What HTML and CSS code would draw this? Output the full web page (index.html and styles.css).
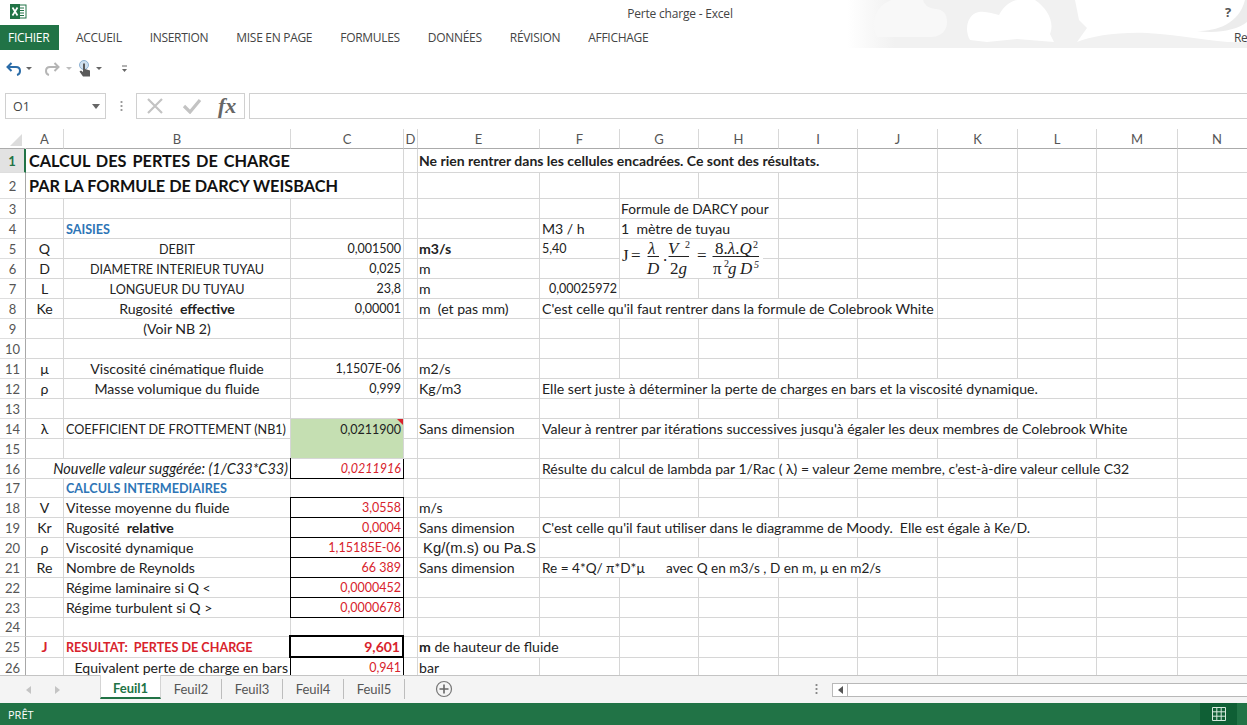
FILE: index.html
```html
<!DOCTYPE html>
<html lang="fr">
<head>
<meta charset="utf-8">
<title>Perte charge - Excel</title>
<link rel="stylesheet" href="styles.css">
</head>
<body>
<div class="app">
  <header class="titlebar">
    <svg class="clouds" viewBox="0 0 400 48" width="400" height="48" aria-hidden="true">
      <defs><linearGradient id="fade" x1="0" x2="1" y1="0" y2="0"><stop offset="0" stop-color="#f1f1f1" stop-opacity="0"/><stop offset=".12" stop-color="#f1f1f1"/><stop offset="1" stop-color="#f1f1f1"/></linearGradient></defs>
      <rect width="400" height="48" fill="url(#fade)"/>
      <path d="M30 37C24 25 28 8 40 2L44 0H76C78 6 82 8 88 9C96 9 100 14 100 22C100 30 95 36 85 37Z" fill="#f8f8f8"/>
      <path d="M123 40C117 30 120 14 132 12C140 11 146 14 152 15C158 4 166 0 172 0H188C200 8 208 22 203 34L207 42L170 39L140 42Z" fill="#fff"/>
      <path d="M228 0H400V33C382 30 372 32 365 31C385 28 398 20 400 0L400 42C370 44 340 35 300 33C270 32 245 36 230 42L240 28L232 20Z" fill="#fff"/>
      <path d="M350 31C370 31 392 24 398 0H400V22C390 30 370 34 350 31Z" fill="#ececec"/>
    </svg>
    <svg class="logo" viewBox="0 0 17 15" width="17" height="15" aria-hidden="true">
      <rect x="7" y="1" width="9" height="13" fill="#fff" stroke="#217346"/>
      <path d="M9 4h5M9 6.500h5M9 9h5M9 11.500h5" stroke="#217346"/>
      <rect x="0" y="0" width="10" height="15" fill="#217346"/>
      <path d="M2.500 3.500l5 8M7.500 3.500l-5 8" stroke="#fff" stroke-width="1.700"/>
    </svg>
    <span class="doc-title">Perte charge - Excel</span>
    <span class="help">?</span>
  </header>

  <nav class="tabs">
    <span class="tab-file">FICHIER</span>
    <span class="tab first">ACCUEIL</span>
    <span class="tab">INSERTION</span>
    <span class="tab">MISE EN PAGE</span>
    <span class="tab">FORMULES</span>
    <span class="tab">DONNÉES</span>
    <span class="tab">RÉVISION</span>
    <span class="tab">AFFICHAGE</span>
    <span class="tab-end">Re</span>
  </nav>

  <div class="qat">
    <svg viewBox="0 0 16 14" width="16" height="14" aria-hidden="true"><path d="M5.500 1L1.500 5L5.500 9" fill="none" stroke="#2b6ca8" stroke-width="2"/><path d="M2 5H10C13 5 14 7 14 9C14 11 13 12.500 11 13" fill="none" stroke="#2b6ca8" stroke-width="2"/></svg>
    <i class="caret dark"></i>
    <svg class="qat-redo" viewBox="0 0 16 14" width="16" height="14" aria-hidden="true"><path d="M10.500 1L14.500 5L10.500 9" fill="none" stroke="#b5b5b5" stroke-width="2"/><path d="M14 5H6C3 5 2 7 2 9C2 11 3 12.500 5 13" fill="none" stroke="#b5b5b5" stroke-width="2"/></svg>
    <i class="caret wide"></i>
    <svg class="qat-touch" viewBox="0 0 14 18" width="14" height="18" aria-hidden="true"><circle cx="6" cy="5" r="4.500" fill="#cfe0ef" stroke="#8fb3d4"/><path d="M5 3.500h2V9l5 1.500V16.500H5L1.500 11.500L3 10.500L5 12Z" fill="#5a5a5a"/></svg>
    <i class="caret dark"></i>
    <svg class="qat-more" viewBox="0 0 7 8" width="7" height="8" aria-hidden="true"><path d="M1 1h5" stroke="#666"/><path d="M1 4h5L3.500 7Z" fill="#666"/></svg>
  </div>

  <div class="formula-bar">
    <div class="namebox"><span>O1</span><i class="caret dark large"></i></div>
    <div class="fb-dots"></div>
    <div class="fb-buttons">
      <svg viewBox="0 0 18 16" width="18" height="16" aria-hidden="true"><path d="M2 1L16 15M16 1L2 15" stroke="#c3c3c3" stroke-width="2.200"/></svg>
      <svg viewBox="0 0 20 16" width="20" height="16" aria-hidden="true"><path d="M2 8L8 14L18 2" fill="none" stroke="#c3c3c3" stroke-width="3.200"/></svg>
      <span class="fx">fx</span>
    </div>
    <div class="fb-input"></div>
  </div>

  <main class="sheet">
    <table class="grid">
      <colgroup><col class="c0"><col class="ca"><col class="cb"><col class="cc"><col class="cd"><col class="ce"><col class="cf"><col class="cg"><col class="ch"><col class="ci"><col class="cj"><col class="ck"><col class="cl"><col class="cm"><col class="cn"></colgroup>
      <thead>
        <tr class="r-head"><th class="corner"><i class="corner-mark"></i></th><th>A</th><th>B</th><th>C</th><th>D</th><th>E</th><th>F</th><th>G</th><th>H</th><th>I</th><th>J</th><th>K</th><th>L</th><th>M</th><th>N</th></tr>
      </thead>
      <tbody>
        <tr class="r1"><th class="rh sel">1</th><td colspan="3" class="title spaced">CALCUL  DES  PERTES  DE  CHARGE</td><td></td><td colspan="5" class="t-e b narrow">Ne rien rentrer dans les cellules encadrées. Ce sont des résultats.</td><td></td><td></td><td></td><td></td><td></td></tr>
        <tr class="r2"><th class="rh">2</th><td colspan="3" class="title">PAR LA FORMULE DE DARCY WEISBACH</td><td></td><td></td><td></td><td></td><td></td><td></td><td></td><td></td><td></td><td></td><td></td></tr>
        <tr><th class="rh">3</th><td></td><td></td><td></td><td></td><td></td><td></td><td colspan="2" class="t-g mixed">Formule de DARCY pour</td><td></td><td></td><td></td><td></td><td></td><td></td></tr>
        <tr><th class="rh">4</th><td></td><td class="t-b blue caps">SAISIES</td><td></td><td></td><td></td><td class="t-f">M3 / h</td><td colspan="2" class="t-g">1  mètre de tuyau</td><td></td><td></td><td></td><td></td><td></td><td></td></tr>
        <tr><th class="rh">5</th><td class="mid">Q</td><td class="mid caps">DEBIT</td><td class="num">0,001500</td><td></td><td class="t-e b">m3/s</td><td class="t-f digits">5,40</td><td></td><td></td><td></td><td></td><td></td><td></td><td></td><td></td></tr>
        <tr><th class="rh">6</th><td class="mid">D</td><td class="mid caps">DIAMETRE INTERIEUR TUYAU</td><td class="num">0,025</td><td></td><td class="t-e">m</td><td></td><td></td><td></td><td></td><td></td><td></td><td></td><td></td><td></td></tr>
        <tr><th class="rh">7</th><td class="mid">L</td><td class="mid caps">LONGUEUR DU TUYAU</td><td class="num">23,8</td><td></td><td class="t-e">m</td><td class="num">0,00025972</td><td></td><td></td><td></td><td></td><td></td><td></td><td></td><td></td></tr>
        <tr><th class="rh">8</th><td class="mid">Ke</td><td class="mid">Rugosité  <b>effective</b></td><td class="num">0,00001</td><td></td><td class="t-e">m  (et pas mm)</td><td colspan="5" class="t-f">C'est celle qu'il faut rentrer dans la formule de Colebrook White</td><td></td><td></td><td></td><td></td></tr>
        <tr><th class="rh">9</th><td></td><td class="mid">(Voir NB 2)</td><td></td><td></td><td></td><td></td><td></td><td></td><td></td><td></td><td></td><td></td><td></td><td></td></tr>
        <tr><th class="rh">10</th><td></td><td></td><td></td><td></td><td></td><td></td><td></td><td></td><td></td><td></td><td></td><td></td><td></td><td></td></tr>
        <tr><th class="rh">11</th><td class="mid">µ</td><td class="mid">Viscosité cinématique fluide</td><td class="num">1,1507E-06</td><td></td><td class="t-e">m2/s</td><td></td><td></td><td></td><td></td><td></td><td></td><td></td><td></td><td></td></tr>
        <tr><th class="rh">12</th><td class="mid">ρ</td><td class="mid">Masse volumique du fluide</td><td class="num">0,999</td><td></td><td class="t-e">Kg/m3</td><td colspan="7" class="t-f">Elle sert juste à déterminer la perte de charges en bars et la viscosité dynamique.</td><td></td><td></td></tr>
        <tr><th class="rh">13</th><td></td><td></td><td></td><td></td><td></td><td></td><td></td><td></td><td></td><td></td><td></td><td></td><td></td><td></td></tr>
        <tr><th class="rh">14</th><td class="mid">λ</td><td class="t-b caps">COEFFICIENT DE FROTTEMENT (NB1)</td><td rowspan="2" class="num green"><span class="note"></span>0,0211900</td><td></td><td class="t-e">Sans dimension</td><td colspan="8" class="t-f">Valeur à rentrer par itérations successives jusqu'à égaler les deux membres de Colebrook White</td><td></td></tr>
        <tr><th class="rh">15</th><td></td><td></td><td></td><td></td><td></td><td></td><td></td><td></td><td></td><td></td><td></td><td></td><td></td></tr>
        <tr><th class="rh">16</th><td colspan="2" class="num it label">Nouvelle valeur suggérée: (1/C33*C33)</td><td class="num red it box">0,0211916</td><td></td><td></td><td colspan="8" class="t-f narrow">Résulte du calcul de lambda par 1/Rac ( λ) = valeur 2eme membre, c’est-à-dire valeur cellule C32</td><td></td></tr>
        <tr class="r19"><th class="rh">17</th><td></td><td class="t-b blue caps">CALCULS INTERMEDIAIRES</td><td></td><td></td><td></td><td></td><td></td><td></td><td></td><td></td><td></td><td></td><td></td><td></td></tr>
        <tr><th class="rh">18</th><td class="mid">V</td><td class="t-b">Vitesse moyenne du fluide</td><td class="num red box">3,0558</td><td></td><td class="t-e">m/s</td><td></td><td></td><td></td><td></td><td></td><td></td><td></td><td></td><td></td></tr>
        <tr><th class="rh">19</th><td class="mid">Kr</td><td class="t-b">Rugosité  <b>relative</b></td><td class="num red box">0,0004</td><td></td><td class="t-e">Sans dimension</td><td colspan="7" class="t-f narrow">C'est celle qu'il faut utiliser dans le diagramme de Moody.  Elle est égale à Ke/D.</td><td></td><td></td></tr>
        <tr><th class="rh">20</th><td class="mid">ρ</td><td class="t-b">Viscosité dynamique</td><td class="num red box">1,15185E-06</td><td></td><td class="t-e arial"> Kg/(m.s) ou Pa.S</td><td></td><td></td><td></td><td></td><td></td><td></td><td></td><td></td><td></td></tr>
        <tr><th class="rh">21</th><td class="mid">Re</td><td class="t-b">Nombre de Reynolds</td><td class="num red box">66 389</td><td></td><td class="t-e">Sans dimension</td><td colspan="5" class="t-f tight">Re = 4*Q/ π*D*µ      avec Q en m3/s , D en m, µ en m2/s</td><td></td><td></td><td></td><td></td></tr>
        <tr><th class="rh">22</th><td></td><td class="t-b">Régime laminaire si Q &lt;</td><td class="num red box">0,0000452</td><td></td><td></td><td></td><td></td><td></td><td></td><td></td><td></td><td></td><td></td><td></td></tr>
        <tr><th class="rh">23</th><td></td><td class="t-b">Régime turbulent si Q &gt;</td><td class="num red box">0,0000678</td><td></td><td></td><td></td><td></td><td></td><td></td><td></td><td></td><td></td><td></td><td></td></tr>
        <tr class="r19"><th class="rh">24</th><td></td><td></td><td></td><td></td><td></td><td></td><td></td><td></td><td></td><td></td><td></td><td></td><td></td><td></td></tr>
        <tr class="r21"><th class="rh">25</th><td class="mid red b">J</td><td class="t-b red b caps">RESULTAT:  PERTES DE CHARGE</td><td class="num red b big box-thick">9,601</td><td></td><td colspan="2" class="t-e"><b>m</b> de hauteur de fluide</td><td></td><td></td><td></td><td></td><td></td><td></td><td></td><td></td></tr>
        <tr><th class="rh">26</th><td></td><td class="num label">Equivalent perte de charge en bars</td><td class="num red box">0,941</td><td></td><td class="t-e">bar</td><td></td><td></td><td></td><td></td><td></td><td></td><td></td><td></td><td></td></tr>
      </tbody>
    </table>
    <svg class="formula" viewBox="0 0 143 39" width="143" height="39" role="img" aria-label="Formule de Darcy">
      <rect width="143" height="39" fill="#fff"/>
      <g font-family="'Liberation Serif', serif" font-size="17" fill="#222">
        <text x="2" y="22">J</text>
        <text x="11" y="22">=</text>
        <text x="28" y="15" font-style="italic">λ</text>
        <text x="27" y="35" font-style="italic">D</text>
        <text x="43" y="22">.</text>
        <text x="48" y="15" font-style="italic">V</text>
        <text x="65" y="9" font-size="10">2</text>
        <text x="50" y="35">2<tspan font-style="italic">g</tspan></text>
        <text x="77" y="22">=</text>
        <text x="95" y="15">8.<tspan font-style="italic">λ</tspan>.<tspan font-style="italic">Q</tspan></text>
        <text x="133" y="9" font-size="10">2</text>
        <text x="93" y="35">π</text>
        <text x="104" y="28" font-size="10">2</text>
        <text x="108" y="35" font-style="italic">g</text>
        <text x="120" y="35" font-style="italic">D</text>
        <text x="134" y="29" font-size="10" font-style="italic">5</text>
      </g>
      <path d="M27.500 17.500H39M48.500 17.500H69M92.500 17.500H139" stroke="#222"/>
    </svg>
  </main>

  <div class="sheetbar">
    <div class="nav-arrows"><i class="tri-l"></i><i class="tri-r"></i></div>
    <div class="sheet-tabs">
      <span class="sheet-tab active">Feuil1</span>
      <span class="sheet-tab">Feuil2</span>
      <span class="sheet-tab">Feuil3</span>
      <span class="sheet-tab">Feuil4</span>
      <span class="sheet-tab">Feuil5</span>
    </div>
    <svg class="add" viewBox="0 0 18 18" width="18" height="18" aria-hidden="true"><circle cx="9" cy="9" r="7.500" fill="none" stroke="#777" stroke-width="1.200"/><path d="M9 4.500v9M4.500 9h9" stroke="#666" stroke-width="1.600"/></svg>
    <div class="sb-dots"></div>
    <div class="hscroll"><div class="hs-btn"><i class="tri-l dark"></i></div></div>
  </div>

  <footer class="status">
    <span>PRÊT</span>
    <div class="view-btn">
      <svg viewBox="0 0 14 14" width="14" height="14" aria-hidden="true"><path d="M.5.500h13v13H.5zM.5 4.800h13M.5 9.200h13M4.800.500v13M9.200.500v13" fill="none" stroke="#d6eadd"/></svg>
    </div>
  </footer>
</div>
</body>
</html>
```
FILE: styles.css
```css
* { box-sizing: border-box; }
html, body { margin: 0; padding: 0; background: #fff; }
body { width: 1247px; height: 725px; overflow: hidden; font-family: "Open Sans", "Liberation Sans", sans-serif; }
.app { display: flex; flex-direction: column; width: 1247px; height: 725px; }

.titlebar { position: relative; flex: 0 0 25px; display: flex; align-items: center; justify-content: center; }
.clouds { position: absolute; left: 847px; top: 0; }
.logo { position: absolute; left: 10px; top: 4px; }
.doc-title { position: relative; font-size: 12px; color: #444; margin-left: 113px; margin-top: 1px; letter-spacing: -.2px; }
.help { position: absolute; left: 1225px; top: 3px; font-size: 13px; font-weight: 700; color: #555; }

.tabs { position: relative; flex: 0 0 25px; display: flex; align-items: center; gap: 28px; font-size: 12px; color: #444; letter-spacing: -.3px; }
.tab-file { align-self: stretch; width: 59px; padding-left: 8px; margin-right: -11px; background: #217346; color: #fff; line-height: 25px; }
.tab-end { position: absolute; left: 1234px; top: 4px; }

.qat { flex: 0 0 43px; display: flex; align-items: center; padding: 0 0 6px 6px; }
.caret { display: inline-block; width: 0; height: 0; margin-left: 4px; border: 3px solid transparent; border-top: 3px solid #bdbdbd; border-bottom: 0; }
.caret.dark { border-top-color: #666; }
.caret.wide { margin-left: 6px; }
.caret.large { border-width: 5px 4px 0; border-color: #666 transparent transparent; }
.qat-redo { margin-left: 12px; }
.qat-touch { margin-left: 6px; }
.qat-more { margin-left: 19px; }

.formula-bar { flex: 0 0 26px; display: flex; align-items: stretch; padding-left: 5px; }
.namebox { width: 101px; display: flex; align-items: center; justify-content: space-between; padding: 0 5px 0 7px; border: 1px solid #d0d0d0; font-size: 12.5px; color: #444; }
.fb-dots { width: 30px; margin: 7px 0; background: radial-gradient(circle, #999 1px, transparent 1.200px) center top / 3px 4px repeat-y; }
.fb-buttons { width: 109px; display: flex; align-items: center; gap: 18px; padding-left: 9px; border: 1px solid #d0d0d0; }
.fx { font-family: "Liberation Serif", serif; font-style: italic; font-weight: 700; font-size: 22px; line-height: 1; color: #666; margin-left: -2px; }
.fb-input { flex: 1; margin-left: 4px; border: 1px solid #d0d0d0; border-right: 0; }

.sheet { position: relative; flex: 0 0 546px; margin-top: 10px; overflow: hidden; }
.grid { width: 1257px; table-layout: fixed; border-collapse: separate; border-spacing: 0; font-family: Lato, "Liberation Sans", sans-serif; font-size: 14.1px; color: #222; }
.c0 { width: 26px; } .ca { width: 38px; } .cb { width: 227px; } .cc { width: 113px; } .cd { width: 14px; }
.ce { width: 122px; } .cf { width: 80px; } .cg { width: 79px; } .ch { width: 80px; } .ci { width: 79px; }
.cj { width: 80px; } .ck { width: 80px; } .cl { width: 79px; } .cm { width: 81px; } .cn { width: 79px; }

.grid tr { height: 20px; }
.grid .r1 { height: 24px; }
.grid .r2 { height: 26px; }
.grid .r19 { height: 19px; }
.grid .r21 { height: 21px; }
.grid th, .grid td { padding: 0; white-space: pre; line-height: 14px; overflow: visible; }
.grid td { border-right: 1px solid #d6d6d6; border-bottom: 1px solid #d6d6d6; }
.grid .r-head th { font-weight: 400; color: #555; font-size: 13px; border-right: 1px solid #d8d8d8; border-bottom: 1px solid #ababab; }
.grid .r-head th.corner { position: relative; border-right-color: transparent; }
.corner-mark { position: absolute; left: 10px; bottom: 2px; width: 0; height: 0; border-left: 12px solid transparent; border-bottom: 12px solid #dcdcdc; }
.grid .rh { font-weight: 400; color: #555; font-size: 13px; border-right: 1px solid #a8a8a8; border-bottom: 1px solid #dedede; }
.grid .rh.sel { background: #e2e2e2; color: #217346; font-weight: 700; border-right: 2px solid #217346; }

.grid .title { font-size: 16.3px; font-weight: 700; padding-left: 3px; color: #111; }
.grid .title.spaced { word-spacing: -1px; }
.grid .t-b { padding-left: 2px; }
.grid .t-e { padding-left: 1px; }
.grid .t-f { padding-left: 2px; }
.grid .t-g { padding-left: 1px; }
.grid .mid { text-align: center; }
.grid .num { text-align: right; padding-right: 2px; padding-top: 1px; font-size: 12.5px; }
.grid .label { font-size: 14.1px; padding-top: 0; }
.grid .label.it { font-size: 14.5px; }
.grid .digits { font-size: 12.5px; }
.grid .caps { font-size: 12.6px; padding-top: 2px; }
.grid .mixed { font-size: 13.7px; }
.grid .tight { font-size: 13.6px; }
.grid .narrow { font-size: 14px; }
.b { font-weight: 700; }
.it { font-style: italic; }
.blue { color: #2e75b6; font-weight: 700; }
.red { color: #d8232c; }
.grid .big { font-size: 14px; }
.grid .arial { font-family: "Liberation Sans", sans-serif; font-size: 14.8px; }
.grid .green { position: relative; background: #c5dfb2; vertical-align: top; padding-top: 4px; }
.note { position: absolute; right: 0; top: 0; width: 0; height: 0; border-left: 6px solid transparent; border-top: 6px solid #d8232c; }
.grid .box { border-right-color: #000; border-bottom-color: #000; box-shadow: -1px 0 0 #000, 0 -1px 0 #000, -1px -1px 0 #000; }
.grid .box-thick { border-right: 2px solid #000; border-bottom: 2px solid #000; box-shadow: -2px 0 0 #000, 0 -2px 0 #000, -2px -2px 0 #000; }
.formula { position: absolute; left: 620px; top: 110px; }

.sheetbar { position: relative; flex: 0 0 28px; display: flex; align-items: stretch; background: #f4f4f4; border-top: 1px solid #c4c4c4; margin-top: 0; }
.nav-arrows { width: 100px; display: flex; align-items: center; gap: 24px; padding-left: 26px; }
.tri-l { display: block; width: 0; height: 0; border: 4px solid transparent; border-left: 0; border-right: 5px solid #c4c4c4; }
.tri-l.dark { border-right-color: #555; }
.tri-r { display: block; width: 0; height: 0; border: 4px solid transparent; border-right: 0; border-left: 5px solid #c4c4c4; }
.sheet-tabs { display: flex; height: 23px; font-family: Lato, "Liberation Sans", sans-serif; font-size: 13px; color: #555; }
.sheet-tab { width: 61px; margin-top: 3px; height: 20px; line-height: 21px; text-align: center; border-right: 1px solid #bdbdbd; }
.sheet-tab.active { margin-top: -1px; height: 24px; line-height: 27px; background: #fff; color: #217346; font-weight: 700; border: 1px solid #d4d4d4; border-top: 0; border-bottom: 2px solid #217346; }
.add { position: absolute; left: 435px; top: 4px; }
.sb-dots { position: absolute; left: 814px; top: 7px; width: 4px; height: 12px; background: radial-gradient(circle, #888 1px, transparent 1.200px) center top / 3px 4px repeat-y; }
.hscroll { position: absolute; left: 832px; top: 7px; right: 0; height: 14px; background: #fff; border: 1px solid #b8b8b8; border-right: 0; }
.hs-btn { width: 15px; height: 12px; display: flex; align-items: center; justify-content: center; border-right: 1px solid #b8b8b8; }

.status { flex: 0 0 22px; display: flex; align-items: center; justify-content: space-between; padding: 0 10px 0 8px; background: #217346; color: #fff; font-size: 11px; }
.view-btn { width: 37px; height: 22px; display: flex; align-items: center; justify-content: center; background: #0f5f35; }
```
